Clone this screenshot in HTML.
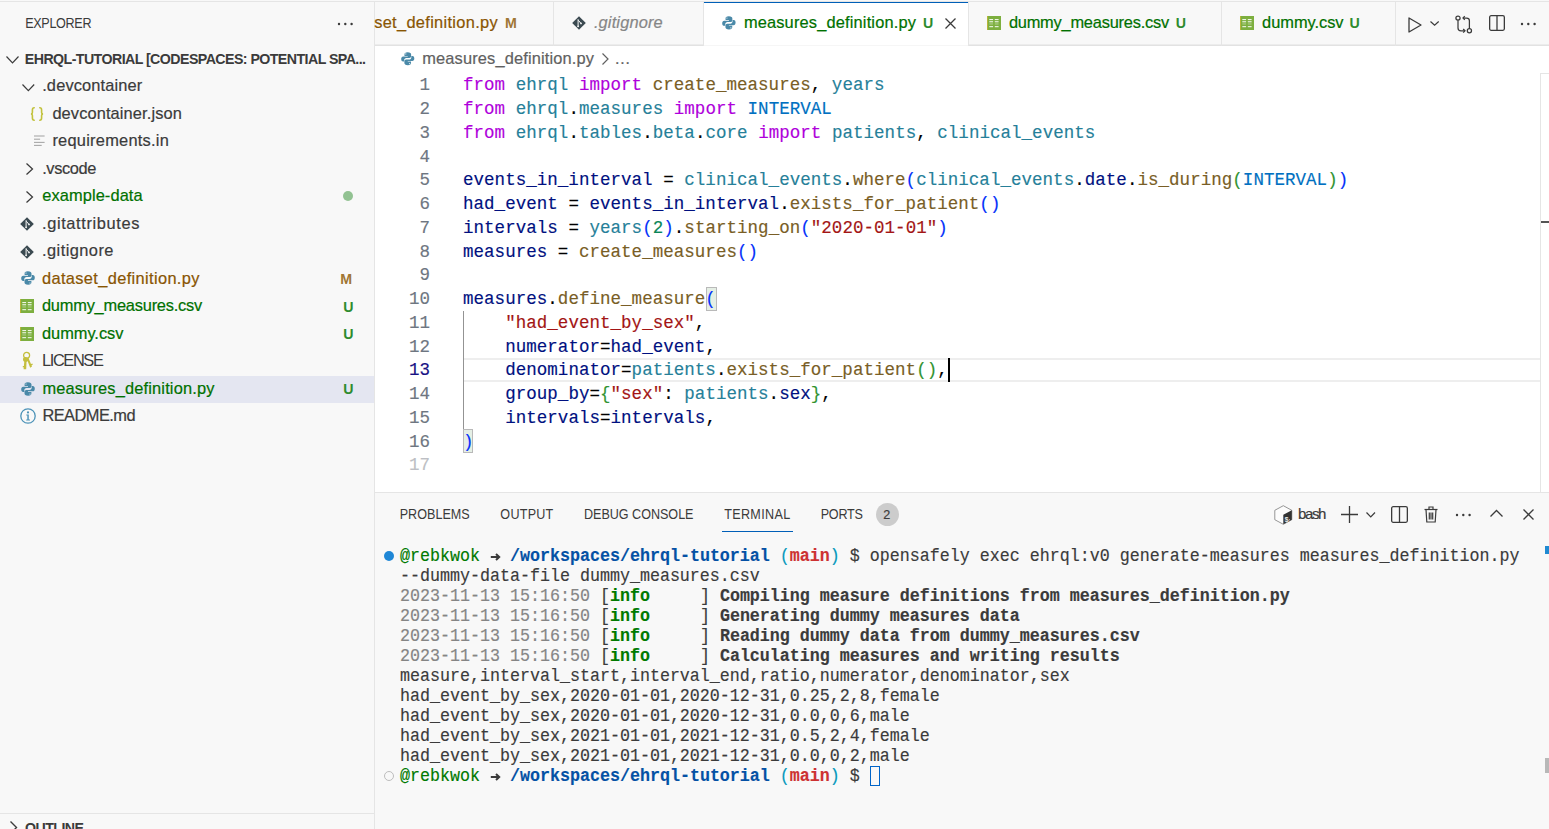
<!DOCTYPE html>
<html><head><meta charset="utf-8"><style>
*{margin:0;padding:0;box-sizing:border-box}
html,body{width:1549px;height:829px;overflow:hidden;background:#f8f8f8}
body{position:relative;font-family:"Liberation Sans",sans-serif;color:#3b3b3b}
.t{position:absolute;white-space:pre;-webkit-text-stroke:0.2px currentColor}
.b{-webkit-text-stroke:0}
.r{position:absolute}
svg{position:absolute;overflow:visible}
.ln{position:absolute;left:380px;width:50px;text-align:right;font-family:"Liberation Mono",monospace;font-size:17.5px;line-height:23.75px;color:#6e7681;white-space:pre;transform-origin:0 16.54px;transform:scaleY(1.07);-webkit-text-stroke:0.15px currentColor}
.ln.act{color:#171184}
.ln.dim{color:#bdbfc4}
.cl{position:absolute;left:463px;font-family:"Liberation Mono",monospace;font-size:17.5px;line-height:23.75px;white-space:pre;letter-spacing:0.035px;transform-origin:0 16.54px;transform:scaleY(1.07)}
.cl span,.tl span{-webkit-text-stroke:0.15px currentColor}
.tl{position:absolute;left:400px;font-family:"Liberation Mono",monospace;font-size:16.667px;line-height:20px;white-space:pre;transform-origin:0 14.44px;transform:scaleY(1.09)}
</style></head><body>
<div class="r" style="left:0px;top:1px;width:1549px;height:1px;background:#e5e5e5;"></div>
<div class="r" style="left:374px;top:1px;width:1px;height:828px;background:#e5e5e5;"></div>
<div class="r" style="left:0px;top:376px;width:374px;height:27px;background:#e4e6f1;"></div>
<div class="r" style="left:0px;top:813px;width:374px;height:1px;background:#e5e5e5;"></div>
<div class="r" style="left:375px;top:45px;width:1174px;height:447px;background:#ffffff;"></div>
<div class="r" style="left:375px;top:44px;width:1174px;height:1px;background:#ececec;"></div>
<div class="r" style="left:375px;top:45px;width:1174px;height:1px;background:#e2e2e2;"></div>
<div class="r" style="left:704px;top:2px;width:264px;height:43px;background:#ffffff;"></div>
<div class="r" style="left:704px;top:45px;width:264px;height:1px;background:#f6f6f6;"></div>
<div class="r" style="left:704px;top:2px;width:264px;height:1.4px;background:#005fb8;"></div>
<div class="r" style="left:553px;top:2px;width:1px;height:44px;background:#e5e5e5;"></div>
<div class="r" style="left:703px;top:2px;width:1px;height:44px;background:#e5e5e5;"></div>
<div class="r" style="left:968px;top:2px;width:1px;height:44px;background:#e5e5e5;"></div>
<div class="r" style="left:1221px;top:2px;width:1px;height:44px;background:#e5e5e5;"></div>
<div class="r" style="left:1395px;top:2px;width:1px;height:44px;background:#e5e5e5;"></div>
<div class="r" style="left:463px;top:358px;width:1077px;height:2px;background:#eeeeee;"></div>
<div class="r" style="left:463px;top:380px;width:1077px;height:2px;background:#eeeeee;"></div>
<div class="r" style="left:463px;top:311px;width:1px;height:118px;background:#939393;"></div>
<div class="r" style="left:706px;top:287px;width:10.5px;height:24px;background:#e5efe5;border:1px solid #b9b9b9"></div>
<div class="r" style="left:463px;top:429px;width:10px;height:23.5px;background:#e5efe5;border:1px solid #b9b9b9"></div>
<div class="r" style="left:948px;top:358px;width:2px;height:24px;background:#000000;"></div>
<div class="r" style="left:1540px;top:73px;width:1px;height:419px;background:#e5e5e5;"></div>
<div class="r" style="left:1540px;top:73px;width:9px;height:1px;background:#e5e5e5;"></div>
<div class="r" style="left:1541px;top:221px;width:8px;height:2px;background:#555555;"></div>
<div class="r" style="left:375px;top:492px;width:1174px;height:1px;background:#e5e5e5;"></div>
<div class="r" style="left:722px;top:531px;width:71px;height:1px;background:#005fb8;"></div>
<div class="r" style="left:876px;top:503px;width:23px;height:23px;border-radius:50%;background:#cccccc"></div>
<div class="r" style="left:384px;top:551px;width:10px;height:10px;border-radius:50%;background:#1f87d6"></div>
<div class="r" style="left:384px;top:771px;width:10px;height:10px;border-radius:50%;border:1.8px solid #bdbdbd"></div>
<div class="r" style="left:870px;top:766px;width:10px;height:20px;border:1px solid #0064c8"></div>
<div class="r" style="left:1545px;top:546px;width:4px;height:8px;background:#1f8ad2;"></div>
<div class="r" style="left:1545px;top:758px;width:4px;height:15px;background:#b8b8b8;"></div>
<svg style="left:336px;top:20.8px" width="18.6" height="6"><circle cx="3.0" cy="3" r="1.2" fill="#3b3b3b"/><circle cx="9.3" cy="3" r="1.2" fill="#3b3b3b"/><circle cx="15.6" cy="3" r="1.2" fill="#3b3b3b"/></svg>
<svg style="left:6px;top:55.7px" width="13" height="7.3"><polyline points="0.5,0.5 6.5,6.8 12.5,0.5" fill="none" stroke="#3b3b3b" stroke-width="1.2"/></svg>
<svg style="left:22.3px;top:84px" width="12.7" height="7.2"><polyline points="0.5,0.5 6.35,6.7 12.2,0.5" fill="none" stroke="#3b3b3b" stroke-width="1.2"/></svg>
<svg style="left:30px;top:107px" width="14" height="14" viewBox="0 0 14 14"><g fill="none" stroke="#c2c23c" stroke-width="1.6" stroke-linecap="round"><path d="M4.2 0.8C2.6 0.8 2.4 1.6 2.4 3V5.4C2.4 6.4 1.9 7 0.9 7C1.9 7 2.4 7.6 2.4 8.6V11C2.4 12.4 2.6 13.2 4.2 13.2"/><path d="M9.8 0.8C11.4 0.8 11.6 1.6 11.6 3V5.4C11.6 6.4 12.1 7 13.1 7C12.1 7 11.6 7.6 11.6 8.6V11C11.6 12.4 11.4 13.2 9.8 13.2"/></g></svg>
<svg style="left:34.3px;top:135px" width="11" height="12"><g stroke="#a8a8a8" stroke-width="1.1"><line x1="0" y1="1" x2="10.6" y2="1"/><line x1="0" y1="4.2" x2="6.1" y2="4.2"/><line x1="0" y1="7.4" x2="10.6" y2="7.4"/><line x1="0" y1="10.4" x2="7.7" y2="10.4"/></g></svg>
<svg style="left:26px;top:163px" width="7" height="12"><polyline points="0.5,0.5 6.5,6.0 0.5,11.5" fill="none" stroke="#3b3b3b" stroke-width="1.25"/></svg>
<svg style="left:26px;top:190.8px" width="7" height="12"><polyline points="0.5,0.5 6.5,6.0 0.5,11.5" fill="none" stroke="#3b3b3b" stroke-width="1.25"/></svg>
<div class="r" style="left:343px;top:190.5px;width:10px;height:10px;border-radius:50%;background:#92c292"></div>
<svg style="left:20.1px;top:217px" width="14" height="14" viewBox="0 0 14 14"><path d="M7 0.2L13.8 7L7 13.8L0.2 7Z" fill="#3b4a51"/><path d="M6.1 3.2V10.6M6.3 4.2L8.9 7.3" stroke="#f8f8f8" stroke-width="1" fill="none"/><circle cx="6.1" cy="10.3" r="0.9" fill="#f8f8f8"/><circle cx="9" cy="7.4" r="0.9" fill="#f8f8f8"/></svg>
<svg style="left:20.1px;top:244.5px" width="14" height="14" viewBox="0 0 14 14"><path d="M7 0.2L13.8 7L7 13.8L0.2 7Z" fill="#3b4a51"/><path d="M6.1 3.2V10.6M6.3 4.2L8.9 7.3" stroke="#f8f8f8" stroke-width="1" fill="none"/><circle cx="6.1" cy="10.3" r="0.9" fill="#f8f8f8"/><circle cx="9" cy="7.4" r="0.9" fill="#f8f8f8"/></svg>
<svg style="left:20.5px;top:271px" width="14" height="14" viewBox="0 0 14 14"><path d="M6.9 0.3c-2.6 0-3.3 1-3.3 2.2v1.6h3.4v0.6H2.2C1 4.7 0.2 5.6 0.2 7.3c0 1.8 0.8 2.6 2 2.6h1.1V8.3c0-1.2 1-2.2 2.2-2.2h3.2c1 0 1.8-0.8 1.8-1.8V2.5c0-1.1-1-2.2-3.6-2.2z" fill="#4a89a8"/><path d="M7.1 13.7c2.6 0 3.3-1 3.3-2.2V9.9H7v-0.6h4.8c1.2 0 2-0.9 2-2.6 0-1.8-0.8-2.6-2-2.6h-1.1v1.6c0 1.2-1 2.2-2.2 2.2H5.3c-1 0-1.8 0.8-1.8 1.8v1.8c0 1.1 1 2.2 3.6 2.2z" fill="#4a89a8"/><circle cx="5" cy="2" r="0.6" fill="#f8f8f8"/><circle cx="9" cy="12" r="0.6" fill="#f8f8f8"/></svg>
<svg style="left:20px;top:299px" width="14" height="14" viewBox="0 0 14 14"><rect x="0" y="0" width="14" height="14" fill="#7daf3f"/><rect x="0" y="0" width="1" height="14" fill="#b8b43a"/><rect x="2.3" y="3" width="3.8" height="1.1" fill="#eef5e6" opacity="1"/><rect x="7.8" y="3" width="3.8" height="1.1" fill="#eef5e6" opacity="1"/><rect x="2.3" y="5.2" width="3.8" height="1.1" fill="#eef5e6" opacity="1"/><rect x="7.8" y="5.2" width="3.8" height="1.1" fill="#eef5e6" opacity="1"/><rect x="2.3" y="7.4" width="3.8" height="1.1" fill="#eef5e6" opacity="0.45"/><rect x="7.8" y="7.4" width="3.8" height="1.1" fill="#eef5e6" opacity="0.45"/><rect x="2.3" y="10.1" width="3.8" height="1.1" fill="#eef5e6" opacity="1"/><rect x="7.8" y="10.1" width="3.8" height="1.1" fill="#eef5e6" opacity="1"/></svg>
<svg style="left:20px;top:327px" width="14" height="14" viewBox="0 0 14 14"><rect x="0" y="0" width="14" height="14" fill="#7daf3f"/><rect x="0" y="0" width="1" height="14" fill="#b8b43a"/><rect x="2.3" y="3" width="3.8" height="1.1" fill="#eef5e6" opacity="1"/><rect x="7.8" y="3" width="3.8" height="1.1" fill="#eef5e6" opacity="1"/><rect x="2.3" y="5.2" width="3.8" height="1.1" fill="#eef5e6" opacity="1"/><rect x="7.8" y="5.2" width="3.8" height="1.1" fill="#eef5e6" opacity="1"/><rect x="2.3" y="7.4" width="3.8" height="1.1" fill="#eef5e6" opacity="0.45"/><rect x="7.8" y="7.4" width="3.8" height="1.1" fill="#eef5e6" opacity="0.45"/><rect x="2.3" y="10.1" width="3.8" height="1.1" fill="#eef5e6" opacity="1"/><rect x="7.8" y="10.1" width="3.8" height="1.1" fill="#eef5e6" opacity="1"/></svg>
<svg style="left:21px;top:351px" width="12" height="19" viewBox="0 0 12 19"><g fill="#c4bf3e"><circle cx="5.6" cy="4.3" r="3" fill="none" stroke="#c4bf3e" stroke-width="1.3"/><ellipse cx="4.6" cy="8.4" rx="2.6" ry="2.4"/><path d="M3.4 9.5H5.6L5.2 18.2H2.6Z"/><path d="M5.6 7.6L7.4 6.8L11 15.6L9.2 16.8Z"/><path d="M9.4 13.2L11.4 12.6L11.8 13.8L10 14.6Z"/><path d="M1.8 15H3.2V16.3H1.8Z"/></g></svg>
<svg style="left:20.8px;top:381.5px" width="14" height="14" viewBox="0 0 14 14"><path d="M6.9 0.3c-2.6 0-3.3 1-3.3 2.2v1.6h3.4v0.6H2.2C1 4.7 0.2 5.6 0.2 7.3c0 1.8 0.8 2.6 2 2.6h1.1V8.3c0-1.2 1-2.2 2.2-2.2h3.2c1 0 1.8-0.8 1.8-1.8V2.5c0-1.1-1-2.2-3.6-2.2z" fill="#4a89a8"/><path d="M7.1 13.7c2.6 0 3.3-1 3.3-2.2V9.9H7v-0.6h4.8c1.2 0 2-0.9 2-2.6 0-1.8-0.8-2.6-2-2.6h-1.1v1.6c0 1.2-1 2.2-2.2 2.2H5.3c-1 0-1.8 0.8-1.8 1.8v1.8c0 1.1 1 2.2 3.6 2.2z" fill="#4a89a8"/><circle cx="5" cy="2" r="0.6" fill="#f8f8f8"/><circle cx="9" cy="12" r="0.6" fill="#f8f8f8"/></svg>
<svg style="left:19.7px;top:408px" width="16" height="16" viewBox="0 0 16 16"><circle cx="8" cy="8" r="7.2" fill="none" stroke="#4d93b8" stroke-width="1.3"/><circle cx="8" cy="4.4" r="1.1" fill="#4d93b8"/><path d="M6.3 6.6H8.8V11.6H10V12.6H6.2V11.6H7.3V7.6H6.3Z" fill="#4d93b8"/></svg>
<svg style="left:9.7px;top:821px" width="7" height="13"><polyline points="0.5,0.5 6.5,6.5 0.5,12.5" fill="none" stroke="#3b3b3b" stroke-width="1.4"/></svg>
<svg style="left:571.7px;top:15.6px" width="14" height="14" viewBox="0 0 14 14"><path d="M7 0.2L13.8 7L7 13.8L0.2 7Z" fill="#3b4a51"/><path d="M6.1 3.2V10.6M6.3 4.2L8.9 7.3" stroke="#f8f8f8" stroke-width="1" fill="none"/><circle cx="6.1" cy="10.3" r="0.9" fill="#f8f8f8"/><circle cx="9" cy="7.4" r="0.9" fill="#f8f8f8"/></svg>
<svg style="left:722px;top:15.8px" width="13.8" height="13.8" viewBox="0 0 14 14"><path d="M6.9 0.3c-2.6 0-3.3 1-3.3 2.2v1.6h3.4v0.6H2.2C1 4.7 0.2 5.6 0.2 7.3c0 1.8 0.8 2.6 2 2.6h1.1V8.3c0-1.2 1-2.2 2.2-2.2h3.2c1 0 1.8-0.8 1.8-1.8V2.5c0-1.1-1-2.2-3.6-2.2z" fill="#4a89a8"/><path d="M7.1 13.7c2.6 0 3.3-1 3.3-2.2V9.9H7v-0.6h4.8c1.2 0 2-0.9 2-2.6 0-1.8-0.8-2.6-2-2.6h-1.1v1.6c0 1.2-1 2.2-2.2 2.2H5.3c-1 0-1.8 0.8-1.8 1.8v1.8c0 1.1 1 2.2 3.6 2.2z" fill="#4a89a8"/><circle cx="5" cy="2" r="0.6" fill="#f8f8f8"/><circle cx="9" cy="12" r="0.6" fill="#f8f8f8"/></svg>
<svg style="left:945px;top:18px" width="11" height="11"><path d="M0.5 0.5L10.5 10.5M10.5 0.5L0.5 10.5" stroke="#3b3b3b" stroke-width="1.3"/></svg>
<svg style="left:986.6px;top:15.9px" width="14" height="14" viewBox="0 0 14 14"><rect x="0" y="0" width="14" height="14" fill="#7daf3f"/><rect x="0" y="0" width="1" height="14" fill="#b8b43a"/><rect x="2.3" y="3" width="3.8" height="1.1" fill="#eef5e6" opacity="1"/><rect x="7.8" y="3" width="3.8" height="1.1" fill="#eef5e6" opacity="1"/><rect x="2.3" y="5.2" width="3.8" height="1.1" fill="#eef5e6" opacity="1"/><rect x="7.8" y="5.2" width="3.8" height="1.1" fill="#eef5e6" opacity="1"/><rect x="2.3" y="7.4" width="3.8" height="1.1" fill="#eef5e6" opacity="0.45"/><rect x="7.8" y="7.4" width="3.8" height="1.1" fill="#eef5e6" opacity="0.45"/><rect x="2.3" y="10.1" width="3.8" height="1.1" fill="#eef5e6" opacity="1"/><rect x="7.8" y="10.1" width="3.8" height="1.1" fill="#eef5e6" opacity="1"/></svg>
<svg style="left:1239.6px;top:15.9px" width="14" height="14" viewBox="0 0 14 14"><rect x="0" y="0" width="14" height="14" fill="#7daf3f"/><rect x="0" y="0" width="1" height="14" fill="#b8b43a"/><rect x="2.3" y="3" width="3.8" height="1.1" fill="#eef5e6" opacity="1"/><rect x="7.8" y="3" width="3.8" height="1.1" fill="#eef5e6" opacity="1"/><rect x="2.3" y="5.2" width="3.8" height="1.1" fill="#eef5e6" opacity="1"/><rect x="7.8" y="5.2" width="3.8" height="1.1" fill="#eef5e6" opacity="1"/><rect x="2.3" y="7.4" width="3.8" height="1.1" fill="#eef5e6" opacity="0.45"/><rect x="7.8" y="7.4" width="3.8" height="1.1" fill="#eef5e6" opacity="0.45"/><rect x="2.3" y="10.1" width="3.8" height="1.1" fill="#eef5e6" opacity="1"/><rect x="7.8" y="10.1" width="3.8" height="1.1" fill="#eef5e6" opacity="1"/></svg>
<svg style="left:1407.5px;top:16.5px" width="14" height="16"><path d="M1 1L13 8L1 15Z" fill="none" stroke="#3b3b3b" stroke-width="1.3" stroke-linejoin="round"/></svg>
<svg style="left:1430.3px;top:21.3px" width="9.2" height="4.8"><polyline points="0.5,0.5 4.6,4.3 8.7,0.5" fill="none" stroke="#3b3b3b" stroke-width="1.2"/></svg>
<svg style="left:1454px;top:14px" width="20" height="20" viewBox="0 0 20 20"><g fill="none" stroke="#3b3b3b" stroke-width="1.25"><circle cx="4" cy="4.1" r="2.1"/><circle cx="15.4" cy="16.8" r="2.1"/><path d="M4 6.2V14Q4 16.8 7 16.8H10.8"/><path d="M9.2 15L11 16.8L9.2 18.6"/><path d="M15.4 14.7V6.8Q15.4 4.1 12.6 4.1H9.2"/><path d="M10.8 2.3L9 4.1L10.8 5.9"/></g></svg>
<svg style="left:1489px;top:15.2px" width="16" height="16"><rect x="0.65" y="0.65" width="14.7" height="14.7" rx="1.5" fill="none" stroke="#3b3b3b" stroke-width="1.3"/><line x1="8" y1="0.65" x2="8" y2="15.35" stroke="#3b3b3b" stroke-width="1.3"/></svg>
<svg style="left:1519.3px;top:20.9px" width="18.6" height="6"><circle cx="3.0" cy="3" r="1.2" fill="#3b3b3b"/><circle cx="9.3" cy="3" r="1.2" fill="#3b3b3b"/><circle cx="15.6" cy="3" r="1.2" fill="#3b3b3b"/></svg>
<svg style="left:400.8px;top:52px" width="13.5" height="13.5" viewBox="0 0 14 14"><path d="M6.9 0.3c-2.6 0-3.3 1-3.3 2.2v1.6h3.4v0.6H2.2C1 4.7 0.2 5.6 0.2 7.3c0 1.8 0.8 2.6 2 2.6h1.1V8.3c0-1.2 1-2.2 2.2-2.2h3.2c1 0 1.8-0.8 1.8-1.8V2.5c0-1.1-1-2.2-3.6-2.2z" fill="#4a89a8"/><path d="M7.1 13.7c2.6 0 3.3-1 3.3-2.2V9.9H7v-0.6h4.8c1.2 0 2-0.9 2-2.6 0-1.8-0.8-2.6-2-2.6h-1.1v1.6c0 1.2-1 2.2-2.2 2.2H5.3c-1 0-1.8 0.8-1.8 1.8v1.8c0 1.1 1 2.2 3.6 2.2z" fill="#4a89a8"/><circle cx="5" cy="2" r="0.6" fill="#f8f8f8"/><circle cx="9" cy="12" r="0.6" fill="#f8f8f8"/></svg>
<svg style="left:602px;top:52.5px" width="6.5" height="12"><polyline points="0.5,0.5 6.0,6.0 0.5,11.5" fill="none" stroke="#616161" stroke-width="1.2"/></svg>
<svg style="left:490px;top:552.5px" width="11" height="8"><path d="M0.8 4H9.2M6 1L9.2 4L6 7" fill="none" stroke="#3b3b3b" stroke-width="2"/></svg>
<svg style="left:490px;top:772.5px" width="11" height="8"><path d="M0.8 4H9.2M6 1L9.2 4L6 7" fill="none" stroke="#3b3b3b" stroke-width="2"/></svg>
<svg style="left:1274px;top:504.5px" width="19" height="20" viewBox="0 0 19 20"><path d="M9.3 0.7L17.8 5.3V14.7L9.3 19.3L0.8 14.7V5.3Z" fill="#fcfcfc" stroke="#8a8a8a" stroke-width="0.9"/><path d="M17.8 5.3V14.7L9.3 19.3V9.8Z" fill="#333333"/><text x="10.6" y="16.6" font-family="Liberation Mono" font-size="7" font-weight="700" fill="#e8e8e8">$</text><path d="M14.6 15.2L16 14.5" stroke="#e8e8e8" stroke-width="0.8"/></svg>
<svg style="left:1341px;top:506px" width="17" height="17"><path d="M8.5 0V17M0 8.5H17" stroke="#3b3b3b" stroke-width="1.3"/></svg>
<svg style="left:1365.5px;top:512px" width="9.5" height="5.5"><polyline points="0.5,0.5 4.75,5.0 9.0,0.5" fill="none" stroke="#3b3b3b" stroke-width="1.2"/></svg>
<svg style="left:1391px;top:506px" width="17" height="17"><rect x="0.65" y="0.65" width="15.7" height="15.7" rx="1.5" fill="none" stroke="#3b3b3b" stroke-width="1.3"/><line x1="8.5" y1="0.65" x2="8.5" y2="16.35" stroke="#3b3b3b" stroke-width="1.3"/></svg>
<svg style="left:1423.5px;top:505.5px" width="14" height="17" viewBox="0 0 14 17"><g fill="none" stroke="#3b3b3b" stroke-width="1.2"><path d="M0.5 3.5H13.5"/><path d="M5 3.5V1H9V3.5"/><path d="M2 3.5L2.8 16H11.2L12 3.5"/><path d="M5.3 6.5V13.5M7 6.5V13.5M8.7 6.5V13.5"/></g></svg>
<svg style="left:1454px;top:511.6px" width="18.6" height="6"><circle cx="3.0" cy="3" r="1.2" fill="#3b3b3b"/><circle cx="9.3" cy="3" r="1.2" fill="#3b3b3b"/><circle cx="15.6" cy="3" r="1.2" fill="#3b3b3b"/></svg>
<svg style="left:1489.8px;top:510px" width="13" height="7"><polyline points="0.5,6.5 6.5,0.5 12.5,6.5" fill="none" stroke="#3b3b3b" stroke-width="1.3"/></svg>
<svg style="left:1523px;top:508.5px" width="11" height="11"><path d="M0.5 0.5L10.5 10.5M10.5 0.5L0.5 10.5" stroke="#3b3b3b" stroke-width="1.3"/></svg>
<div class="t b" style="left:25.17px;top:11.93px;font-size:12.6px;line-height:24px;color:#3b3b3b;font-weight:400;letter-spacing:-0.323px;transform-origin:0 16.37px;transform:scaleY(1.09)">EXPLORER</div>
<div class="t b" style="left:24.79px;top:47.28px;font-size:14.2px;line-height:24px;color:#3b3b3b;font-weight:700;letter-spacing:-0.557px">EHRQL-TUTORIAL [CODESPACES: POTENTIAL SPA...</div>
<div class="t" style="left:42.18px;top:73.12px;font-size:16.4px;line-height:24px;color:#3b3b3b;font-weight:400;letter-spacing:0.146px">.devcontainer</div>
<div class="t" style="left:52.38px;top:100.62px;font-size:16.4px;line-height:24px;color:#3b3b3b;font-weight:400;letter-spacing:0.119px">devcontainer.json</div>
<div class="t" style="left:52.38px;top:128.12px;font-size:16.4px;line-height:24px;color:#3b3b3b;font-weight:400;letter-spacing:0.251px">requirements.in</div>
<div class="t" style="left:42.18px;top:155.62px;font-size:16.4px;line-height:24px;color:#3b3b3b;font-weight:400;letter-spacing:-0.371px">.vscode</div>
<div class="t" style="left:42.18px;top:183.12px;font-size:16.4px;line-height:24px;color:#007100;font-weight:400;letter-spacing:0.106px">example-data</div>
<div class="t" style="left:41.98px;top:210.62px;font-size:16.4px;line-height:24px;color:#3b3b3b;font-weight:400;letter-spacing:0.629px">.gitattributes</div>
<div class="t" style="left:41.98px;top:238.12px;font-size:16.4px;line-height:24px;color:#3b3b3b;font-weight:400;letter-spacing:0.449px">.gitignore</div>
<div class="t" style="left:41.98px;top:265.62px;font-size:16.4px;line-height:24px;color:#895503;font-weight:400;letter-spacing:0.356px">dataset_definition.py</div>
<div class="t b" style="left:340.29px;top:267.28px;font-size:14.2px;line-height:24px;color:#a07634;font-weight:700">M</div>
<div class="t" style="left:41.98px;top:293.12px;font-size:16.4px;line-height:24px;color:#007100;font-weight:400;letter-spacing:-0.217px">dummy_measures.csv</div>
<div class="t b" style="left:343.29px;top:294.78px;font-size:14.2px;line-height:24px;color:#2e8b2e;font-weight:700">U</div>
<div class="t" style="left:41.98px;top:320.62px;font-size:16.4px;line-height:24px;color:#007100;font-weight:400;letter-spacing:-0.024px">dummy.csv</div>
<div class="t b" style="left:343.29px;top:322.28px;font-size:14.2px;line-height:24px;color:#2e8b2e;font-weight:700">U</div>
<div class="t b" style="left:41.98px;top:348.12px;font-size:16.4px;line-height:24px;color:#3b3b3b;font-weight:400;letter-spacing:-1.377px">LICENSE</div>
<div class="t" style="left:42.38px;top:375.62px;font-size:16.4px;line-height:24px;color:#007100;font-weight:400;letter-spacing:0.167px">measures_definition.py</div>
<div class="t b" style="left:343.29px;top:377.28px;font-size:14.2px;line-height:24px;color:#2e8b2e;font-weight:700">U</div>
<div class="t" style="left:42.38px;top:403.12px;font-size:16.4px;line-height:24px;color:#3b3b3b;font-weight:400;letter-spacing:-0.535px">README.md</div>
<div class="t b" style="left:24.89px;top:815.58px;font-size:14.2px;line-height:24px;color:#3b3b3b;font-weight:700;letter-spacing:-0.515px">OUTLINE</div>
<div class="t" style="left:374.18px;top:9.92px;font-size:16.4px;line-height:24px;color:#895503;font-weight:400;letter-spacing:0.313px">set_definition.py</div>
<div class="t b" style="left:504.89px;top:10.68px;font-size:14.2px;line-height:24px;color:#a07634;font-weight:700">M</div>
<div class="t" style="left:593.88px;top:9.92px;font-size:16.4px;line-height:24px;color:#868686;font-weight:400;letter-spacing:0.149px;font-style:italic">.gitignore</div>
<div class="t" style="left:743.88px;top:9.92px;font-size:16.4px;line-height:24px;color:#007100;font-weight:400;letter-spacing:0.167px">measures_definition.py</div>
<div class="t b" style="left:923.09px;top:10.68px;font-size:14.2px;line-height:24px;color:#2e8b2e;font-weight:700">U</div>
<div class="t" style="left:1008.88px;top:9.92px;font-size:16.4px;line-height:24px;color:#007100;font-weight:400;letter-spacing:-0.217px">dummy_measures.csv</div>
<div class="t b" style="left:1175.69px;top:10.68px;font-size:14.2px;line-height:24px;color:#2e8b2e;font-weight:700">U</div>
<div class="t" style="left:1262.08px;top:9.92px;font-size:16.4px;line-height:24px;color:#007100;font-weight:400;letter-spacing:-0.024px">dummy.csv</div>
<div class="t b" style="left:1349.59px;top:10.68px;font-size:14.2px;line-height:24px;color:#2e8b2e;font-weight:700">U</div>
<div class="t" style="left:422.28px;top:46.12px;font-size:16.4px;line-height:24px;color:#616161;font-weight:400;letter-spacing:0.153px">measures_definition.py</div>
<div class="t" style="left:614.18px;top:46.12px;font-size:16.4px;line-height:24px;color:#616161;font-weight:400">…</div>
<div class="t b" style="left:399.67px;top:503.33px;font-size:12.6px;line-height:24px;color:#3b3b3b;font-weight:400;letter-spacing:0.019px;transform-origin:0 16.37px;transform:scaleY(1.09)">PROBLEMS</div>
<div class="t b" style="left:500.37px;top:503.33px;font-size:12.6px;line-height:24px;color:#3b3b3b;font-weight:400;letter-spacing:0.231px;transform-origin:0 16.37px;transform:scaleY(1.09)">OUTPUT</div>
<div class="t b" style="left:583.97px;top:503.33px;font-size:12.6px;line-height:24px;color:#3b3b3b;font-weight:400;letter-spacing:-0.028px;transform-origin:0 16.37px;transform:scaleY(1.09)">DEBUG CONSOLE</div>
<div class="t b" style="left:724.17px;top:503.33px;font-size:12.6px;line-height:24px;color:#3b3b3b;font-weight:400;letter-spacing:0.335px;transform-origin:0 16.37px;transform:scaleY(1.09)">TERMINAL</div>
<div class="t b" style="left:820.67px;top:503.33px;font-size:12.6px;line-height:24px;color:#3b3b3b;font-weight:400;letter-spacing:-0.231px;transform-origin:0 16.37px;transform:scaleY(1.09)">PORTS</div>
<div class="t" style="left:883.17px;top:502.83px;font-size:12.6px;line-height:24px;color:#3b3b3b;font-weight:400">2</div>
<div class="t" style="left:1298.05px;top:501.70px;font-size:15px;line-height:24px;color:#3b3b3b;font-weight:400;letter-spacing:-1.394px">bash</div>
<div class="ln" style="top:74.46px">1</div>
<div class="cl" style="top:74.46px"><span style="color:#af00db">from</span><span style="color:#000000"> </span><span style="color:#267f99">ehrql</span><span style="color:#000000"> </span><span style="color:#af00db">import</span><span style="color:#000000"> </span><span style="color:#795e26">create_measures</span><span style="color:#000000">, </span><span style="color:#267f99">years</span></div>
<div class="ln" style="top:98.21px">2</div>
<div class="cl" style="top:98.21px"><span style="color:#af00db">from</span><span style="color:#000000"> </span><span style="color:#267f99">ehrql</span><span style="color:#000000">.</span><span style="color:#267f99">measures</span><span style="color:#000000"> </span><span style="color:#af00db">import</span><span style="color:#000000"> </span><span style="color:#0070c1">INTERVAL</span></div>
<div class="ln" style="top:121.96px">3</div>
<div class="cl" style="top:121.96px"><span style="color:#af00db">from</span><span style="color:#000000"> </span><span style="color:#267f99">ehrql</span><span style="color:#000000">.</span><span style="color:#267f99">tables</span><span style="color:#000000">.</span><span style="color:#267f99">beta</span><span style="color:#000000">.</span><span style="color:#267f99">core</span><span style="color:#000000"> </span><span style="color:#af00db">import</span><span style="color:#000000"> </span><span style="color:#267f99">patients</span><span style="color:#000000">, </span><span style="color:#267f99">clinical_events</span></div>
<div class="ln" style="top:145.71px">4</div>
<div class="ln" style="top:169.46px">5</div>
<div class="cl" style="top:169.46px"><span style="color:#001080">events_in_interval</span><span style="color:#000000"> = </span><span style="color:#267f99">clinical_events</span><span style="color:#000000">.</span><span style="color:#795e26">where</span><span style="color:#0431fa">(</span><span style="color:#267f99">clinical_events</span><span style="color:#000000">.</span><span style="color:#001080">date</span><span style="color:#000000">.</span><span style="color:#795e26">is_during</span><span style="color:#319331">(</span><span style="color:#0070c1">INTERVAL</span><span style="color:#319331">)</span><span style="color:#0431fa">)</span></div>
<div class="ln" style="top:193.21px">6</div>
<div class="cl" style="top:193.21px"><span style="color:#001080">had_event</span><span style="color:#000000"> = </span><span style="color:#001080">events_in_interval</span><span style="color:#000000">.</span><span style="color:#795e26">exists_for_patient</span><span style="color:#0431fa">()</span></div>
<div class="ln" style="top:216.96px">7</div>
<div class="cl" style="top:216.96px"><span style="color:#001080">intervals</span><span style="color:#000000"> = </span><span style="color:#267f99">years</span><span style="color:#0431fa">(</span><span style="color:#098658">2</span><span style="color:#0431fa">)</span><span style="color:#000000">.</span><span style="color:#795e26">starting_on</span><span style="color:#0431fa">(</span><span style="color:#a31515">&quot;2020-01-01&quot;</span><span style="color:#0431fa">)</span></div>
<div class="ln" style="top:240.71px">8</div>
<div class="cl" style="top:240.71px"><span style="color:#001080">measures</span><span style="color:#000000"> = </span><span style="color:#795e26">create_measures</span><span style="color:#0431fa">()</span></div>
<div class="ln" style="top:264.46px">9</div>
<div class="ln" style="top:288.21px">10</div>
<div class="cl" style="top:288.21px"><span style="color:#001080">measures</span><span style="color:#000000">.</span><span style="color:#795e26">define_measure</span><span style="color:#0431fa">(</span></div>
<div class="ln" style="top:311.96px">11</div>
<div class="cl" style="top:311.96px"><span style="color:#000000">    </span><span style="color:#a31515">&quot;had_event_by_sex&quot;</span><span style="color:#000000">,</span></div>
<div class="ln" style="top:335.71px">12</div>
<div class="cl" style="top:335.71px"><span style="color:#000000">    </span><span style="color:#001080">numerator</span><span style="color:#000000">=</span><span style="color:#001080">had_event</span><span style="color:#000000">,</span></div>
<div class="ln act" style="top:359.46px">13</div>
<div class="cl" style="top:359.46px"><span style="color:#000000">    </span><span style="color:#001080">denominator</span><span style="color:#000000">=</span><span style="color:#267f99">patients</span><span style="color:#000000">.</span><span style="color:#795e26">exists_for_patient</span><span style="color:#319331">()</span><span style="color:#000000">,</span></div>
<div class="ln" style="top:383.21px">14</div>
<div class="cl" style="top:383.21px"><span style="color:#000000">    </span><span style="color:#001080">group_by</span><span style="color:#000000">=</span><span style="color:#319331">{</span><span style="color:#a31515">&quot;sex&quot;</span><span style="color:#000000">: </span><span style="color:#267f99">patients</span><span style="color:#000000">.</span><span style="color:#001080">sex</span><span style="color:#319331">}</span><span style="color:#000000">,</span></div>
<div class="ln" style="top:406.96px">15</div>
<div class="cl" style="top:406.96px"><span style="color:#000000">    </span><span style="color:#001080">intervals</span><span style="color:#000000">=</span><span style="color:#001080">intervals</span><span style="color:#000000">,</span></div>
<div class="ln" style="top:430.71px">16</div>
<div class="cl" style="top:430.71px"><span style="color:#0431fa">)</span></div>
<div class="ln dim" style="top:454.46px">17</div>
<div class="tl" style="top:547.16px"><span style="color:#007a00;font-weight:400">@rebkwok</span><span style="color:#3b3b3b;font-weight:700">   </span><span style="color:#0451a5;font-weight:700">/workspaces/ehrql-tutorial</span><span style="color:#0598bc;font-weight:400"> (</span><span style="color:#cd3131;font-weight:700">main</span><span style="color:#0598bc;font-weight:400">)</span><span style="color:#3b3b3b;font-weight:400"> $ </span><span style="color:#3b3b3b;font-weight:400">opensafely exec ehrql:v0 generate-measures measures_definition.py</span></div>
<div class="tl" style="top:567.16px"><span style="color:#3b3b3b;font-weight:400">--dummy-data-file dummy_measures.csv</span></div>
<div class="tl" style="top:587.16px"><span style="color:#858585;font-weight:400">2023-11-13 15:16:50</span><span style="color:#3b3b3b;font-weight:400"> [</span><span style="color:#007a00;font-weight:700">info     </span><span style="color:#3b3b3b;font-weight:400">]</span><span style="color:#3b3b3b;font-weight:700"> Compiling measure definitions from measures_definition.py</span></div>
<div class="tl" style="top:607.16px"><span style="color:#858585;font-weight:400">2023-11-13 15:16:50</span><span style="color:#3b3b3b;font-weight:400"> [</span><span style="color:#007a00;font-weight:700">info     </span><span style="color:#3b3b3b;font-weight:400">]</span><span style="color:#3b3b3b;font-weight:700"> Generating dummy measures data</span></div>
<div class="tl" style="top:627.16px"><span style="color:#858585;font-weight:400">2023-11-13 15:16:50</span><span style="color:#3b3b3b;font-weight:400"> [</span><span style="color:#007a00;font-weight:700">info     </span><span style="color:#3b3b3b;font-weight:400">]</span><span style="color:#3b3b3b;font-weight:700"> Reading dummy data from dummy_measures.csv</span></div>
<div class="tl" style="top:647.16px"><span style="color:#858585;font-weight:400">2023-11-13 15:16:50</span><span style="color:#3b3b3b;font-weight:400"> [</span><span style="color:#007a00;font-weight:700">info     </span><span style="color:#3b3b3b;font-weight:400">]</span><span style="color:#3b3b3b;font-weight:700"> Calculating measures and writing results</span></div>
<div class="tl" style="top:667.16px"><span style="color:#3b3b3b;font-weight:400">measure,interval_start,interval_end,ratio,numerator,denominator,sex</span></div>
<div class="tl" style="top:687.16px"><span style="color:#3b3b3b;font-weight:400">had_event_by_sex,2020-01-01,2020-12-31,0.25,2,8,female</span></div>
<div class="tl" style="top:707.16px"><span style="color:#3b3b3b;font-weight:400">had_event_by_sex,2020-01-01,2020-12-31,0.0,0,6,male</span></div>
<div class="tl" style="top:727.16px"><span style="color:#3b3b3b;font-weight:400">had_event_by_sex,2021-01-01,2021-12-31,0.5,2,4,female</span></div>
<div class="tl" style="top:747.16px"><span style="color:#3b3b3b;font-weight:400">had_event_by_sex,2021-01-01,2021-12-31,0.0,0,2,male</span></div>
<div class="tl" style="top:767.16px"><span style="color:#007a00;font-weight:400">@rebkwok</span><span style="color:#3b3b3b;font-weight:700">   </span><span style="color:#0451a5;font-weight:700">/workspaces/ehrql-tutorial</span><span style="color:#0598bc;font-weight:400"> (</span><span style="color:#cd3131;font-weight:700">main</span><span style="color:#0598bc;font-weight:400">)</span><span style="color:#3b3b3b;font-weight:400"> $ </span></div>
</body></html>
